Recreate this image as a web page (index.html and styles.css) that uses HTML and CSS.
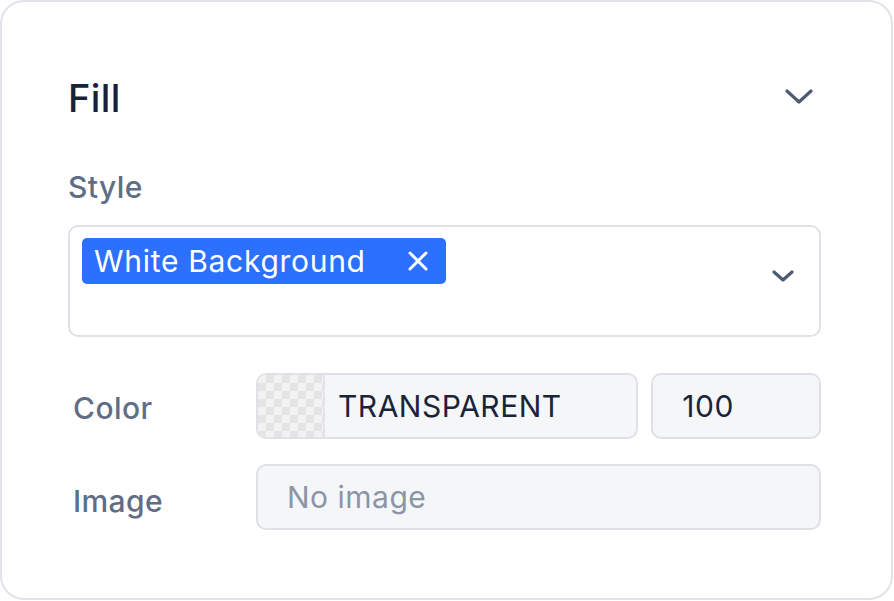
FILE: index.html
```html
<!DOCTYPE html>
<html>
<head>
<meta charset="utf-8">
<link rel="stylesheet" href="styles.css">
</head>
<body>
<div class="card">
  <div class="header">
    <h2 class="title">Fill</h2>
    <svg class="chev-lg" width="28" height="16" viewBox="0 0 28 16"><path d="M2 2 L14 13 L26 2" fill="none" stroke="#4b5b73" stroke-width="3.2" stroke-linecap="round" stroke-linejoin="round"/></svg>
  </div>
  <div class="label-style">Style</div>
  <div class="select">
    <div class="chips">
      <span class="chip"><span class="chip-text">White Background</span>
        <svg class="chip-x" width="22" height="22" viewBox="0 0 22 22"><path d="M3 3 L19 19 M19 3 L3 19" stroke="#fff" stroke-width="3" stroke-linecap="round"/></svg>
      </span>
    </div>
    <svg class="chev-sm" width="22" height="12" viewBox="0 0 22 12"><path d="M2 2 L11 10 L20 2" fill="none" stroke="#4b5b73" stroke-width="3.2" stroke-linecap="round" stroke-linejoin="round"/></svg>
  </div>
  <div class="row row-color">
    <div class="row-label">Color</div>
    <div class="field color-field">
      <div class="checker"></div>
      <div class="field-text">TRANSPARENT</div>
    </div>
    <div class="field opacity-field"><div class="field-text">100</div></div>
  </div>
  <div class="row row-image">
    <div class="row-label">Image</div>
    <div class="field image-field"><div class="field-text placeholder">No image</div></div>
  </div>
</div>
</body>
</html>
```
FILE: styles.css
```css
* { box-sizing: border-box; }
html, body { margin: 0; padding: 0; background: #ffffff; }
body { font-family: Inter, "Noto Sans", sans-serif; }
.card {
  width: 893px;
  height: 600px;
  margin: 0;
  border: 2px solid #e1e3e8;
  border-radius: 24px;
  padding: 73px 70px 0 66px;
  background: #fff;
}
.header {
  display: flex;
  align-items: center;
  justify-content: space-between;
  height: 46px;
}
.title {
  margin: 0;
  font-size: 38px;
  line-height: 46px;
  font-weight: 500;
  color: #172236;
  letter-spacing: 0.4px;
}
.chev-lg { margin-right: 8px; margin-top: -2px; }
.label-style {
  margin-top: 48px;
  font-size: 30px;
  line-height: 36px;
  color: #5f6e85;
  font-weight: 500;
  letter-spacing: 0.4px;
}
.select {
  margin-top: 20px;
  height: 112px;
  border: 2px solid #dfe1e6;
  border-radius: 10px;
  display: flex;
  justify-content: space-between;
  align-items: flex-start;
  padding: 11px 25px 0 12px;
}
.chip {
  display: inline-flex;
  align-items: center;
  height: 46px;
  background: #2b70fe;
  border-radius: 5px;
  padding: 0 17px 0 12px;
  color: #fff;
  font-size: 30px;
  font-weight: 400;
  letter-spacing: 0.7px;
}
.chip-text { line-height: 46px; }
.chip-x { margin-left: 41px; }
.chev-sm { margin-top: 32px; }
.row {
  display: flex;
  align-items: center;
}
.row-color { margin-top: 36px; height: 66px; }
.row-image { margin-top: 25px; height: 66px; }
.row-label {
  width: 188px;
  padding-left: 5px;
  font-size: 30px;
  color: #5f6e85;
  font-weight: 500;
  letter-spacing: 0.4px;
  flex: none;
}
.row-color .row-label { padding-top: 4px; }
.row-image .row-label { padding-top: 8px; }
.field {
  height: 66px;
  background: #f5f6f8;
  border: 2px solid #dfe1e6;
  border-radius: 10px;
  display: flex;
  align-items: center;
  overflow: hidden;
}
.color-field { width: 383px; }
.opacity-field { width: 170px; margin-left: 13px; padding-left: 29px; }
.image-field { flex: 1; padding-left: 29px; }
.checker {
  width: 67px;
  height: 100%;
  flex: none;
  border-right: 2px solid #e3e5e9;
  background-color: #f2f2f2;
  background-image:
    linear-gradient(45deg, #e4e4e4 25%, transparent 25%, transparent 75%, #e4e4e4 75%),
    linear-gradient(45deg, #e4e4e4 25%, transparent 25%, transparent 75%, #e4e4e4 75%);
  background-size: 16px 16px;
  background-position: 0 0, 8px 8px;
}
.color-field .field-text { padding-left: 13px; }
.field-text {
  font-size: 30px;
  color: #1a2438;
  letter-spacing: 0.5px;
}
.placeholder { color: #8b95a6; }
```
